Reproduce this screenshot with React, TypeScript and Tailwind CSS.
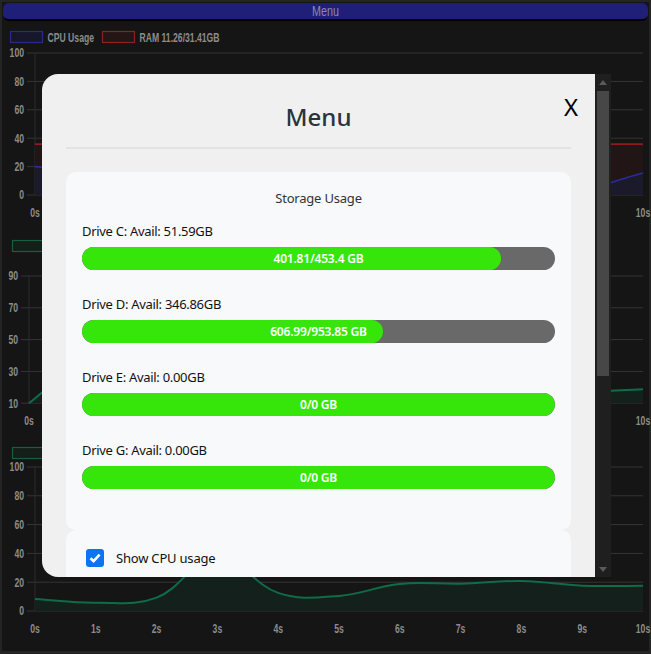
import React from "react";

type Pt = [number, number];

type Series = { values: number[]; stroke: string; fill: string; width?: number };

type ChartProps = {
  top: number;
  height: number;
  axisX: number;
  grid: number[];
  toY: (v: number) => number;
  baseY: number;
  xLabelY: number;
  legend: { x: number; y: number; stroke: string; fill: string; label: string }[];
  series: Series[];
};

const RIGHT = 641;
const LABEL_FONT = "'Liberation Sans', Arial, sans-serif";

// chart.js style spline (tension 0.4)
function splinePath(pts: Pt[], t = 0.4) {
  const cps = pts.map((cur, i) => {
    const prev = pts[i - 1] || cur;
    const next = pts[i + 1] || cur;
    const d01 = Math.hypot(cur[0] - prev[0], cur[1] - prev[1]);
    const d12 = Math.hypot(next[0] - cur[0], next[1] - cur[1]);
    const sum = d01 + d12 || 1;
    const fa = (t * d01) / sum;
    const fb = (t * d12) / sum;
    return {
      prev: [cur[0] - fa * (next[0] - prev[0]), cur[1] - fa * (next[1] - prev[1])],
      next: [cur[0] + fb * (next[0] - prev[0]), cur[1] + fb * (next[1] - prev[1])],
    };
  });
  let d = `M${pts[0][0]},${pts[0][1]}`;
  for (let i = 0; i < pts.length - 1; i++) {
    const a = cps[i].next;
    const b = cps[i + 1].prev;
    const p = pts[i + 1];
    d += ` C${a[0]},${a[1]} ${b[0]},${b[1]} ${p[0]},${p[1]}`;
  }
  return d;
}

function SquishText({ x, y, anchor = "start", children }: any) {
  return (
    <text
      transform={`translate(${x} ${y}) scale(0.72 1)`}
      textAnchor={anchor}
      fontFamily={LABEL_FONT}
      fontSize={12}
      fontWeight={700}
      fill="#8c8c8c"
    >
      {children}
    </text>
  );
}

function Chart({ top, height, axisX, grid, toY, baseY, xLabelY, legend, series }: ChartProps) {
  const step = (RIGHT - axisX) / 10;
  const xs = Array.from({ length: 11 }, (_, i) => axisX + i * step);
  return (
    <svg width={651} height={height} className="block shrink-0">
      <g transform={`translate(0 ${-top})`}>
        {legend.map((l) => (
          <g key={l.label}>
            <rect x={l.x} y={l.y} width={32} height={11} fill={l.fill} stroke={l.stroke} strokeWidth={1.2} />
            <SquishText x={l.x + 37} y={l.y + 10}>
              {l.label}
            </SquishText>
          </g>
        ))}

        {grid.map((v) => (
          <line key={v} x1={axisX - 8} x2={RIGHT} y1={toY(v)} y2={toY(v)} stroke="#353535" strokeWidth={1} />
        ))}
        <line x1={axisX} x2={axisX} y1={toY(grid[0])} y2={baseY} stroke="#2c2c2c" strokeWidth={1} />

        {series.map((s, i) => {
          const pts: Pt[] = s.values.map((v, k) => [xs[k], toY(v)]);
          const d = splinePath(pts);
          return (
            <g key={i}>
              <path d={`${d} L${RIGHT},${baseY} L${axisX},${baseY} Z`} fill={s.fill} />
              <path d={d} fill="none" stroke={s.stroke} strokeWidth={s.width ?? 2} />
            </g>
          );
        })}

        {grid.map((v) => (
          <SquishText key={v} x={axisX - 11} y={toY(v) + 4.3} anchor="end">
            {v}
          </SquishText>
        ))}
        {xs.map((x, i) => (
          <SquishText key={i} x={x} y={xLabelY + 4.3} anchor="middle">
            {i}s
          </SquishText>
        ))}
      </g>
    </svg>
  );
}

const drives = [
  { name: "C", avail: "51.59", used: 401.81, total: 453.4 },
  { name: "D", avail: "346.86", used: 606.99, total: 953.85 },
  { name: "E", avail: "0.00", used: 0, total: 0 },
  { name: "G", avail: "0.00", used: 0, total: 0 },
];

const green = { stroke: "#0f6c49", fill: "#14201c" };

export default function App() {
  return (
    <div className="h-[654px] w-[651px] overflow-hidden bg-[#242424] p-[2px] pb-[3px]">
      <div className="relative flex h-full flex-col bg-[#151515]">
        <div className="mx-[1px] mt-[1px] flex h-[18px] shrink-0 items-center justify-center rounded-[6px] border-b-2 border-black bg-[#1f1f78]">
          <span className="inline-block scale-x-[0.77] font-['Liberation_Sans',Arial,sans-serif] text-[14px] leading-none text-[#8a8aa6]">
            Menu
          </span>
        </div>

        <Chart
          top={21}
          height={211}
          axisX={33}
          grid={[100, 80, 60, 40, 20, 0]}
          toY={(v) => 195 - v * 1.42}
          baseY={195}
          xLabelY={213}
          legend={[
            { x: 8.5, y: 31.5, stroke: "#2a2a8e", fill: "#17172b", label: "CPU Usage" },
            { x: 100.5, y: 31.5, stroke: "#8e2222", fill: "#251616", label: "RAM 11.26/31.41GB" },
          ]}
          series={[
            { values: Array(11).fill(35.8), stroke: "#8e1d1d", fill: "#211516", width: 1.6 },
            { values: [20, 17, 14, 22, 12, 10, 13, 9, 11, 5, 15.5], stroke: "#2b2ba0", fill: "#1b1a2b", width: 1.6 },
          ]}
        />

        <Chart
          top={232}
          height={207}
          axisX={27}
          grid={[90, 70, 50, 30, 10]}
          toY={(v) => 403.2 - (v - 10) * 1.59}
          baseY={403.2}
          xLabelY={421}
          legend={[{ x: 10.5, y: 240.5, stroke: "#16603f", fill: "#141f1a", label: "GPU Usage" }]}
          series={[{ values: [10, 40, 55, 48, 35, 30, 26, 22, 20, 17.5, 18.7], ...green }]}
        />

        <Chart
          top={439}
          height={206}
          axisX={33}
          grid={[100, 80, 60, 40, 20, 0]}
          toY={(v) => 611 - v * 1.44}
          baseY={611}
          xLabelY={629}
          legend={[{ x: 10.5, y: 447.5, stroke: "#16603f", fill: "#141f1a", label: "Network" }]}
          series={[{ values: [8.4, 5.8, 9.3, 38, 12.6, 10.5, 18.8, 19, 20.8, 17.6, 17.6], ...green }]}
        />

        {/* modal */}
        <div className="absolute left-[40px] top-[72px] flex h-[503px] w-[569px] font-['Noto_Sans',sans-serif]">
          <div className="flex-1 overflow-hidden rounded-l-2xl bg-[#f0f0f0] px-6 pt-[26px]">
            <div className="relative flex h-[34px] items-center justify-center">
              <h2 className="text-[24px] font-medium leading-none text-[#2b3240]">Menu</h2>
              <span className="absolute right-[-7px] top-[-5px] text-[24px] leading-none text-black">X</span>
            </div>
            <div className="mt-[13px] h-[2px] bg-[#e2e2e8]" />

            <div className="mt-[23px] rounded-[10px] bg-[#f8f9fb] px-4 pb-[41px] pt-[17px]">
              <p className="text-center text-[13px] leading-[18px] tracking-[-0.2px] text-[#333]">Storage Usage</p>
              <div className="mt-[15px] flex flex-col gap-[25px]">
                {drives.map((d) => {
                  const pct = d.total ? (d.used / d.total) * 100 : 100;
                  return (
                    <div key={d.name}>
                      <p className="text-[13px] leading-[18px] tracking-[-0.3px] text-[#111]">
                        Drive {d.name}: Avail: {d.avail}GB
                      </p>
                      <div className="relative mt-[7px] h-[23px] overflow-hidden rounded-full bg-[#696969]">
                        <div className="h-full rounded-full bg-[#36e60b]" style={{ width: `${pct}%` }} />
                        <span className="absolute inset-0 flex items-center justify-center text-[12px] font-semibold tracking-[-0.2px] text-white">
                          {d.used}/{d.total} GB
                        </span>
                      </div>
                    </div>
                  );
                })}
              </div>
            </div>

            <div className="flex items-center gap-3 rounded-[10px] bg-[#f8f9fb] px-5 pb-6 pt-[19px]">
              <span className="flex h-[18px] w-[18px] items-center justify-center rounded-[3px] bg-[#0b74f2]">
                <svg width="14" height="14" viewBox="0 0 14 14">
                  <path d="M2.5 7.2 L5.6 10.2 L11.6 3.6" fill="none" stroke="#fff" strokeWidth="2.6" />
                </svg>
              </span>
              <span className="text-[13px] leading-[18px] tracking-[-0.2px] text-[#111]">Show CPU usage</span>
            </div>
          </div>

          {/* scrollbar */}
          <div className="flex w-4 flex-col bg-[#1f1f1f]">
            <div className="flex h-4 items-center justify-center">
              <svg width="8" height="5" viewBox="0 0 8 5">
                <path d="M0 5 L4 0 L8 5 Z" fill="#5a5a5a" />
              </svg>
            </div>
            <div className="mx-[2px] mt-[1px] h-[285px] bg-[#474747]" />
            <div className="flex-1" />
            <div className="flex h-4 items-center justify-center">
              <svg width="8" height="5" viewBox="0 0 8 5">
                <path d="M0 0 L8 0 L4 5 Z" fill="#5a5a5a" />
              </svg>
            </div>
          </div>
        </div>
      </div>
    </div>
  );
}
